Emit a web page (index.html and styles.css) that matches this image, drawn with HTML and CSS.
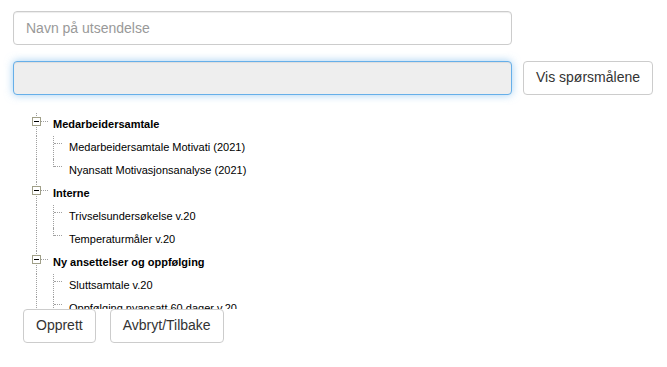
FILE: index.html
```html
<!DOCTYPE html>
<html lang="no">
<head>
<meta charset="utf-8">
<title>Utsendelse</title>
<link rel="stylesheet" href="styles.css">
</head>
<body>
<div class="page">
  <div class="row-name">
    <input class="form-control name-input" type="text" placeholder="Navn på utsendelse">
  </div>
  <div class="row-select">
    <input class="form-control select-input" type="text" disabled>
    <button class="btn" type="button">Vis spørsmålene</button>
  </div>

  <div class="tree">
    <ul class="tree-root">
      <li>
        <div class="node parent"><span class="gutter"><span class="toggle"></span></span><span class="label bold">Medarbeidersamtale</span></div>
        <ul class="children">
          <li class="node leaf"><span class="indent"></span><span class="branch"></span><span class="label">Medarbeidersamtale Motivati (2021)</span></li>
          <li class="node leaf last"><span class="indent"></span><span class="branch"></span><span class="label">Nyansatt Motivasjonsanalyse (2021)</span></li>
        </ul>
      </li>
      <li>
        <div class="node parent"><span class="gutter"><span class="toggle"></span></span><span class="label bold">Interne</span></div>
        <ul class="children">
          <li class="node leaf"><span class="indent"></span><span class="branch"></span><span class="label">Trivselsundersøkelse v.20</span></li>
          <li class="node leaf last"><span class="indent"></span><span class="branch"></span><span class="label">Temperaturmåler v.20</span></li>
        </ul>
      </li>
      <li>
        <div class="node parent"><span class="gutter"><span class="toggle"></span></span><span class="label bold">Ny ansettelser og oppfølging</span></div>
        <ul class="children">
          <li class="node leaf"><span class="indent"></span><span class="branch"></span><span class="label">Sluttsamtale v.20</span></li>
          <li class="node leaf"><span class="indent"></span><span class="branch"></span><span class="label">Oppfølging nyansatt 60 dager v.20</span></li>
        </ul>
      </li>
    </ul>
  </div>

  <div class="actions">
    <button class="btn" type="button">Opprett</button>
    <button class="btn" type="button">Avbryt/Tilbake</button>
  </div>
</div>
</body>
</html>
```
FILE: styles.css
```css
* { box-sizing: border-box; }

body {
  margin: 0;
  font-family: "Liberation Sans", Arial, Helvetica, sans-serif;
  font-size: 14px;
  line-height: 1.42857;
  color: #333;
  background: #fff;
}

.page {
  padding: 11px 0 0 13px;
}

.form-control {
  display: block;
  height: 34px;
  padding: 6px 12px;
  font-family: inherit;
  font-size: 14px;
  line-height: 1.42857;
  color: #555;
  background: #fff;
  border: 1px solid #ccc;
  border-radius: 4px;
  box-shadow: inset 0 1px 1px rgba(0,0,0,.075);
  outline: none;
}
.form-control::placeholder { color: #999; }

.name-input { width: 499px; }

.row-select {
  display: flex;
  align-items: flex-start;
  gap: 11px;
  margin-top: 16px;
}

.select-input {
  width: 499px;
  background: #eee;
  border-color: #66afe9;
  box-shadow: inset 0 1px 1px rgba(0,0,0,.075), 0 0 8px rgba(102,175,233,.6);
}

.btn {
  display: inline-block;
  height: 34px;
  padding: 6px 12px;
  font-family: inherit;
  font-size: 14px;
  line-height: 1.42857;
  color: #333;
  background: #fff;
  border: 1px solid #ccc;
  border-radius: 4px;
  white-space: nowrap;
  cursor: pointer;
}

/* tree */
.tree {
  margin: 18px 0 0 14px;
  height: 196px;
  overflow: hidden;
  font-size: 11px;
  color: #000;
}
.tree ul { list-style: none; margin: 0; padding: 0; }

.node {
  display: flex;
  height: 23px;
  line-height: 23px;
}

.label { white-space: nowrap; }
.bold { font-weight: bold; }

.gutter {
  position: relative;
  flex: none;
  width: 21px;
  height: 23px;
  margin-right: 5px;
}
.gutter::before {
  content: "";
  position: absolute;
  left: 9px; top: 0; bottom: 0;
  border-left: 1px dotted #a0a0a0;
}
.gutter::after {
  content: "";
  position: absolute;
  left: 14px; top: 8px;
  width: 7px;
  border-top: 1px dotted #a0a0a0;
}
.toggle {
  position: absolute;
  left: 5px; top: 4px;
  width: 9px; height: 9px;
  background: #fff;
  border: 1px solid #a09f88;
  z-index: 1;
}
.toggle::after {
  content: "";
  position: absolute;
  left: 1px; top: 3px;
  width: 5px; height: 1px;
  background: #000;
}

.indent {
  position: relative;
  flex: none;
  width: 26px;
  height: 23px;
}
.indent::before {
  content: "";
  position: absolute;
  left: 9px; top: 0; bottom: 0;
  border-left: 1px dotted #a0a0a0;
}
.branch {
  position: relative;
  flex: none;
  width: 16px;
  height: 23px;
}
.branch::before {
  content: "";
  position: absolute;
  left: 0; top: 0; bottom: 0;
  border-left: 1px dotted #a0a0a0;
}
.last .branch::before { bottom: auto; height: 8px; }
.branch::after {
  content: "";
  position: absolute;
  left: 1px; top: 7px;
  width: 8px;
  border-top: 1px dotted #a0a0a0;
}

.actions {
  display: flex;
  gap: 14px;
  margin-left: 10px;
}
```
